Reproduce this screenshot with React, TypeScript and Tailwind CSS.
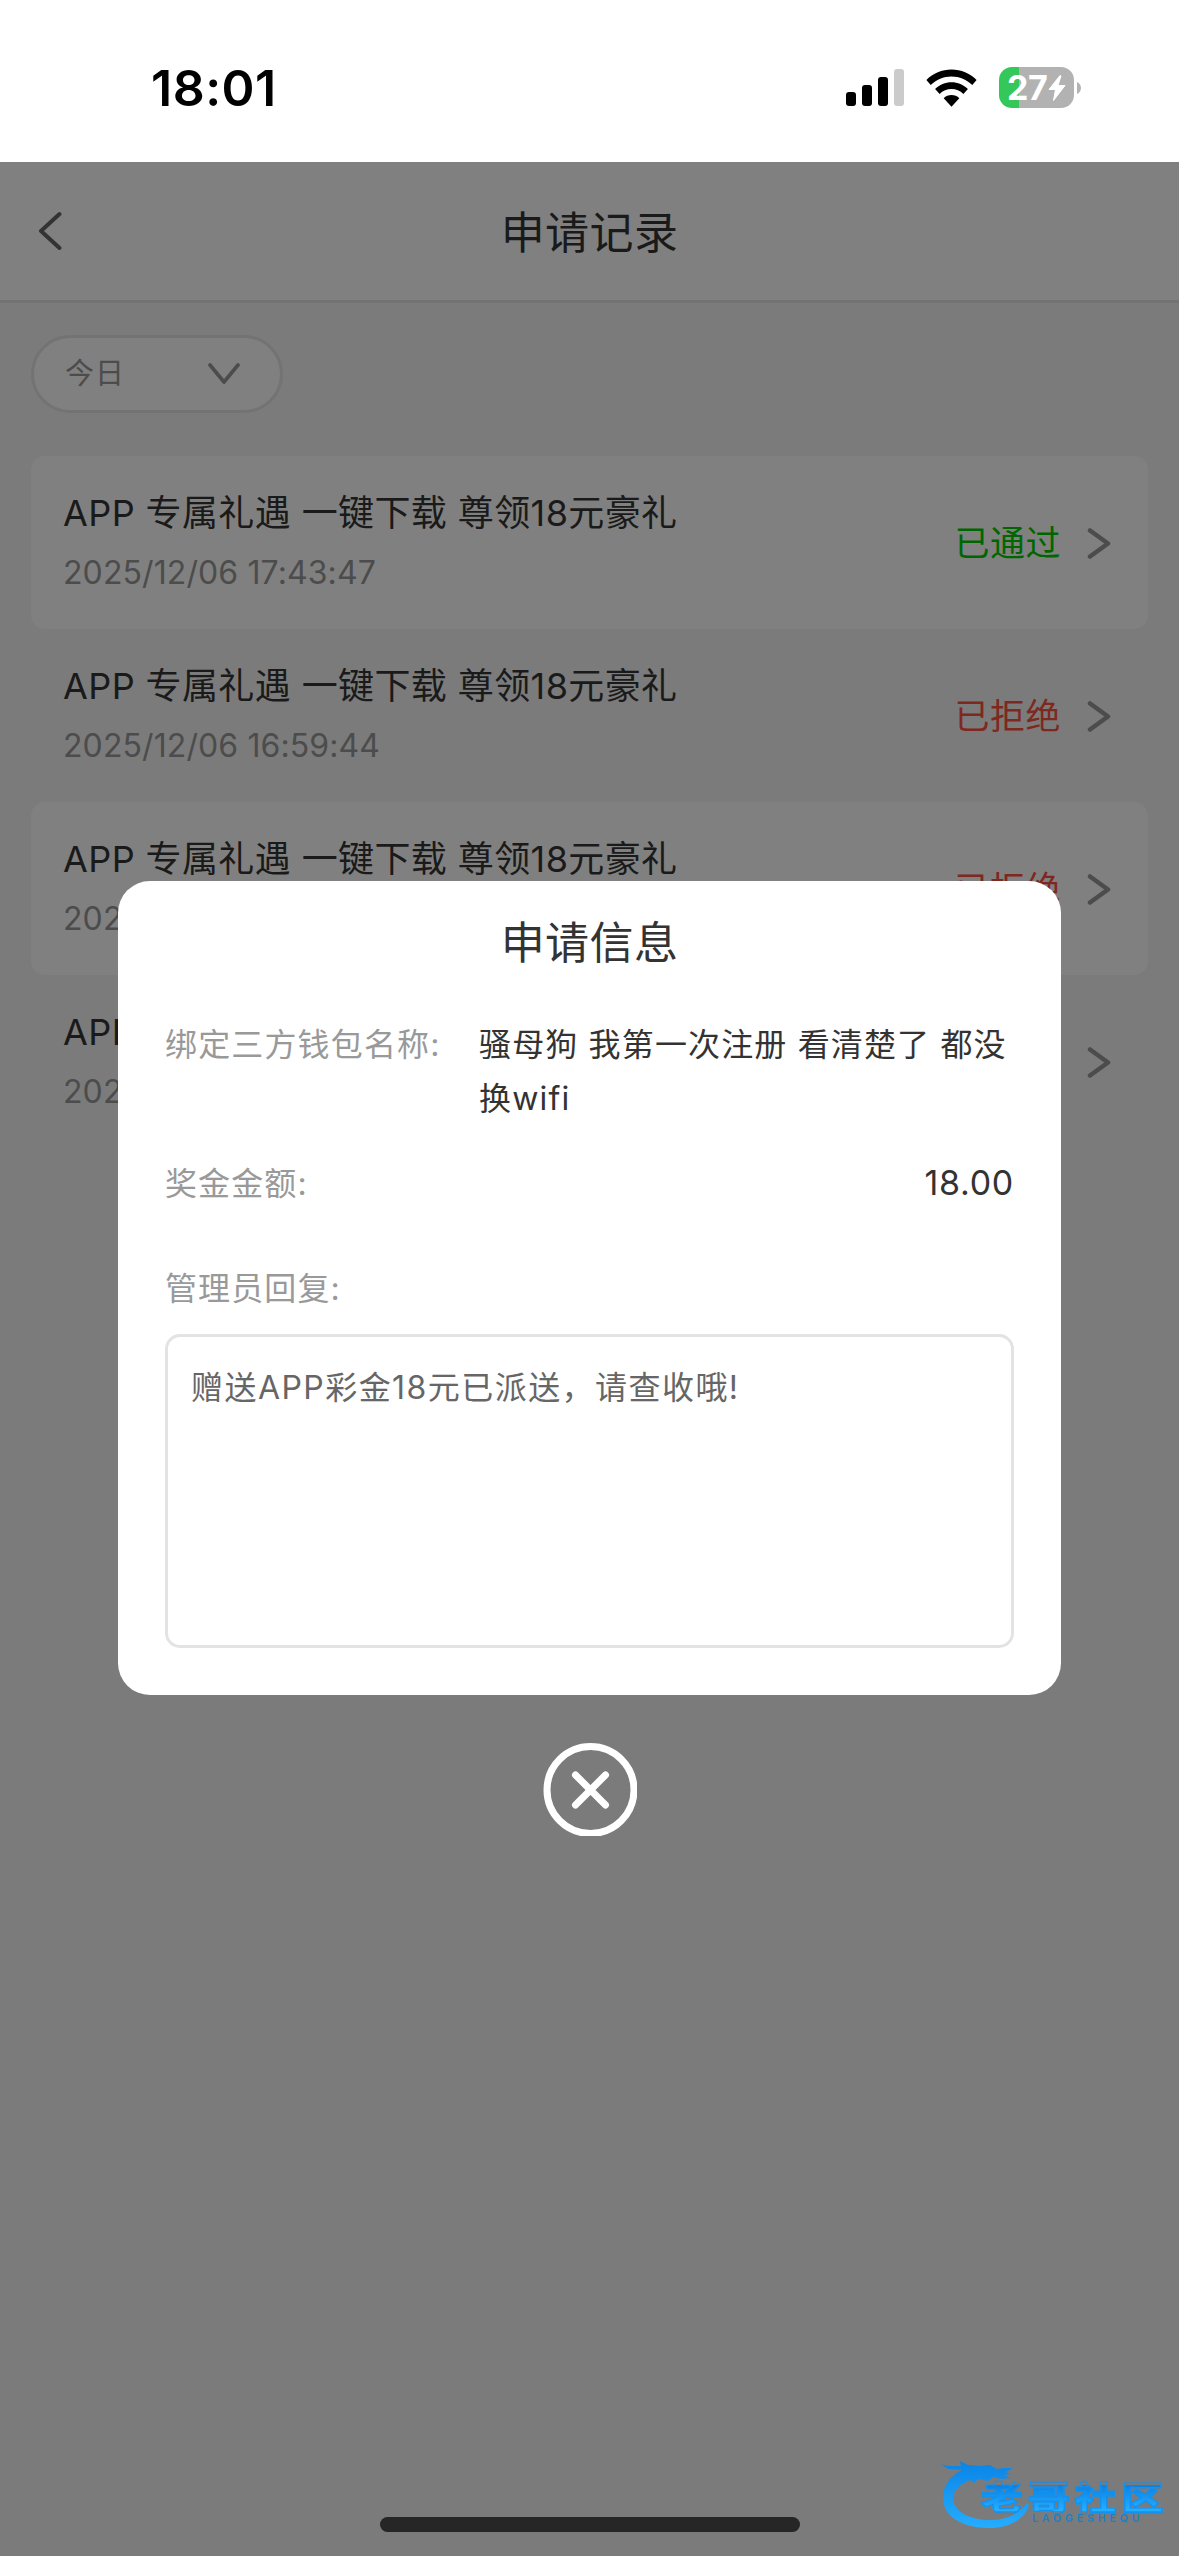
import React from "react";

type Rec = { time: string; status: string; ok?: boolean; shaded?: boolean };

const records: Rec[] = [
  { time: "2025/12/06 17:43:47", status: "已通过", ok: true, shaded: true },
  { time: "2025/12/06 16:59:44", status: "已拒绝" },
  { time: "2025/12/06 16:59:44", status: "已拒绝", shaded: true },
  { time: "2025/12/06 16:59:44", status: "已拒绝" },
];

function StatusBar() {
  return (
    <div className="flex h-[162px] items-start justify-between bg-white pt-[58px] pr-[98px] pl-[151px]">
      <div className="text-[50px] leading-[60px] font-semibold tracking-[0.5px] text-black">18:01</div>
      <div className="mt-[9px] flex h-[41px] items-center">
        <svg width="58" height="37" viewBox="0 0 58 37">
          <rect x="0" y="23" width="10" height="14" rx="3" />
          <rect x="16" y="16" width="10" height="21" rx="3" />
          <rect x="32" y="8" width="10" height="29" rx="3" />
          <rect x="48" y="0" width="10" height="37" rx="3" fill="#cbcbcb" />
        </svg>
        <svg className="ml-[22px]" width="51" height="38" viewBox="0 0 51 38">
          <path d="M25.500 0.500C35 .5 44 4.300 50.600 11L46.300 16C40.800 10.500 33.500 7.400 25.500 7.400S10.200 10.500 4.700 16L.4 11C7 4.300 16 .5 25.500 .5Z" />
          <path d="M25.500 13.200C31.700 13.200 37.500 15.600 41.900 20L37.400 25C34.200 21.900 30 20.100 25.500 20.100S16.800 21.900 13.600 25L9.100 20C13.500 15.600 19.300 13.200 25.500 13.200Z" />
          <path d="M25.500 26C28.500 26 31.300 27.100 33.300 29.200L25.500 37.800L17.700 29.200C19.700 27.100 22.500 26 25.500 26Z" />
        </svg>
        <div className="ml-[22px] flex h-[41px] w-[75px] items-center overflow-hidden rounded-[13px] bg-[linear-gradient(90deg,#34c759_20px,#b2b2b2_20px)] pl-[8px]">
          <span className="text-[34px] leading-[41px] font-bold tracking-[-0.5px] text-white">27</span>
          <svg className="ml-[1px]" width="18" height="26" viewBox="0 0 18 26">
            <path d="M12 .5L1 14.500H7.500L5.500 25.500L17 10.500H10L13 1Z" fill="#fff" stroke="#fff" strokeLinejoin="round" />
          </svg>
        </div>
        <svg className="ml-[3px]" width="4" height="12" viewBox="0 0 4 12">
          <path d="M0 0C2.500 1 4 3.500 4 6S2.500 11 0 12Z" fill="#b2b2b2" />
        </svg>
      </div>
    </div>
  );
}

function Row({ r }: { r: Rec }) {
  return (
    <div className={`flex h-[173px] items-center justify-between rounded-[14px] pr-[37px] pl-[32px] ${r.shaded ? "bg-[#808080]" : ""}`}>
      <div className="pt-px">
        <div className="text-[36px] leading-[60px] tracking-[0.400px] whitespace-nowrap text-[#1a1a1a]">APP 专属礼遇 一键下载 尊领18元豪礼</div>
        <div className="text-[32px] leading-[60px] tracking-[0.1px] text-[#4c4c4c]">{r.time}</div>
      </div>
      <div className="flex items-center gap-[25px]">
        <span className={`text-[35px] leading-[50px] tracking-[0.5px] ${r.ok ? "text-[#006600]" : "text-[#7f2820]"}`}>{r.status}</span>
        <svg width="25" height="34" viewBox="0 0 25 34" fill="none" stroke="#4c4c4c" strokeWidth="4.5" strokeLinecap="round" strokeLinejoin="round">
          <path d="M4 4.500L22 17.500L4 30.500" />
        </svg>
      </div>
    </div>
  );
}

function Watermark() {
  return (
    <div className="absolute right-[15px] bottom-[26px] h-[70px] w-[224px]">
      <svg className="absolute inset-0" width="224" height="70" viewBox="0 0 224 70">
        <defs>
          <linearGradient id="wave" x1="0" y1="0" x2="0" y2="1">
            <stop offset="0" stopColor="#0a84e6" />
            <stop offset="1" stopColor="#25adff" />
          </linearGradient>
        </defs>
        <path
          fill="url(#wave)"
          d="M1 4L8 6L21 6L20 1L28 5L40 6L50 5L57 9L64 8L73 8L66 12L71 14L64 15L71 18L61 19L54 17L48 21L38 19L34 23L30 20C19 25 13 31 13 39C14 52 31 60 50 60C67 60 80 53 87 43L89 45C86 58 70 68 49 68C22 68 3 56 3 38C3 25 11 15 22 10L8 9Z"
        />
      </svg>
      <div className="absolute top-[21px] left-[41px] h-[34px] origin-center scale-y-[0.78] bg-linear-to-b from-[#0a80e4] to-[#25b0ff] bg-clip-text text-[42px] leading-[34px] font-black tracking-[4.800px] whitespace-nowrap text-transparent [-webkit-text-stroke:1.5px_#1490ee]">老哥社区</div>
      <div className="absolute top-[54px] left-[92px] text-[10.500px] leading-[10px] font-semibold tracking-[3.900px] whitespace-nowrap text-[#1f7fc4]">LAOGESHEQU</div>
    </div>
  );
}

export default function App() {
  return (
    <div className="relative flex h-[2556px] w-[1179px] flex-col overflow-hidden bg-[#7b7b7b] font-[Inter,'Noto_Sans_CJK_SC',sans-serif]">
      <StatusBar />
      <header className="grid h-[141px] grid-cols-[100px_1fr_100px] items-center border-b-[3px] border-[#737373] bg-[#808080]">
        <svg className="ml-[36px]" width="26" height="42" viewBox="0 0 26 42" fill="none" stroke="#333" strokeWidth="4" strokeLinecap="round" strokeLinejoin="round">
          <path d="M23.500 4L5 21L23.500 38" />
        </svg>
        <h1 className="mt-[3px] text-center text-[44px] leading-[60px] tracking-[0.400px] text-[#1a1a1a]">申请记录</h1>
      </header>
      <div className="px-[31px] pt-[32px]">
        <div className="flex h-[78px] w-[252px] items-center justify-between rounded-full border-[3px] border-[#737373] bg-[#808080] pr-[40px] pl-[31px]">
          <span className="text-[29px] leading-[40px] tracking-[1px] text-[#4c4c4c]">今日</span>
          <svg width="32" height="24" viewBox="0 0 32 24" fill="none" stroke="#4c4c4c" strokeWidth="3.600" strokeLinecap="round" strokeLinejoin="round">
            <path d="M2 3L16 20L30 3" />
          </svg>
        </div>
        <div className="mt-[43px] flex flex-col">
          {records.map((r, i) => (
            <Row key={i} r={r} />
          ))}
        </div>
      </div>

      <div className="absolute inset-x-0 top-[881px] flex flex-col items-center">
        <section className="flex h-[814px] w-[943px] flex-col rounded-[32px] bg-white px-[47px] text-[32px] text-[#333]">
          <h2 className="mt-[32px] text-center text-[44px] leading-[60px] tracking-[0.400px]">申请信息</h2>
          <div className="mt-[45px] flex justify-between leading-[54px] tracking-[1.150px]">
            <span className="text-[#999]">绑定三方钱包名称:</span>
            <span className="w-[535px] tracking-[1.150px]">
              骚母狗 我第一次注册 看清楚了 都没<br />换wifi
            </span>
          </div>
          <div className="mt-[31px] flex items-center justify-between leading-[54px] tracking-[1.100px]">
            <span className="text-[#999]">奖金金额:</span>
            <span className="-mt-[2px] text-[34px] tracking-[0.7px]">18.00</span>
          </div>
          <div className="mt-[51px] leading-[54px] tracking-[1.100px] text-[#999]">管理员回复:</div>
          <div className="mt-[18px] h-[314px] rounded-[15px] border-[3px] border-[#e3e3e3] px-[23px] pt-[24px] leading-[54px] tracking-[1.450px] text-[#666]">
            赠送APP彩金18元已派送，请查收哦!
          </div>
        </section>
        <svg className="mt-[47px]" width="94" height="94" viewBox="0 0 94 94" fill="none" stroke="#fff" strokeWidth="7">
          <circle cx="47.500" cy="48" r="43.500" />
          <path d="M32.500 33L62.500 63M62.500 33L32.500 63" strokeLinecap="round" />
        </svg>
      </div>

      <div className="absolute bottom-[24px] left-[380px] h-[15px] w-[420px] rounded-full bg-[#262626]" />
      <Watermark />
    </div>
  );
}
